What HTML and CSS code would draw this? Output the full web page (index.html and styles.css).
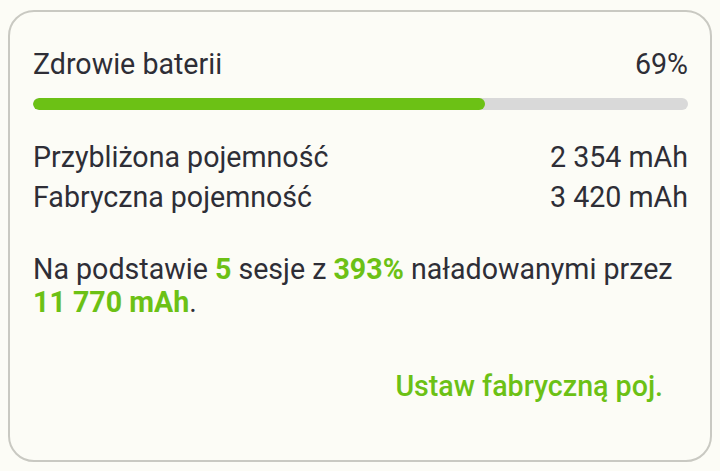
FILE: index.html
```html
<!DOCTYPE html>
<html lang="pl">
<head>
    <meta charset="UTF-8">
    <meta name="viewport" content="width=device-width, initial-scale=1.0">
    <title>Zdrowie baterii</title>
    <link rel="stylesheet" href="styles.css">
</head>
<body>
    <div class="card">
        <div class="row head">
            <span>Zdrowie baterii</span>
            <span>69%</span>
        </div>
        <div class="bar"><div class="fill" style="width: 69%"></div></div>

        <div class="rows">
            <div class="row">
                <span>Przybliżona pojemność</span>
                <span>2&nbsp;354 mAh</span>
            </div>
            <div class="row">
                <span>Fabryczna pojemność</span>
                <span>3&nbsp;420 mAh</span>
            </div>
        </div>

        <p class="note">Na podstawie <b>5</b> sesje z <b>393%</b> naładowanymi przez <b>11&nbsp;770&nbsp;mAh</b>.</p>

        <div class="actions">
            <button type="button">Ustaw fabryczną poj.</button>
        </div>
    </div>
</body>
</html>
```

FILE: styles.css
```css
body {
    margin: 0;
    background-color: #fcfcf6;
    font-family: Roboto, 'Noto Sans', sans-serif;
    color: #2e2e36;
    padding: 10px 8px;
}

.card {
    box-sizing: border-box;
    height: 452px;
    border: 2px solid #c9c9c2;
    border-radius: 26px;
    background-color: #fcfcf6;
    padding: 32px 22px 0 23px;
}

.row {
    display: flex;
    justify-content: space-between;
    font-size: 28.6px;
    line-height: 40px;
}

.head {
    margin-bottom: 14px;
}

.bar {
    height: 12px;
    border-radius: 6px;
    background-color: #d9d9d9;
    overflow: hidden;
}

.fill {
    height: 100%;
    border-radius: 6px;
    background-color: #6cc115;
}

.rows {
    margin-top: 27px;
}

.note {
    margin: 36px 0 0;
    font-size: 28.6px;
    line-height: 33px;
}

.note b {
    color: #6cc115;
    font-weight: 700;
}

.actions {
    display: flex;
    justify-content: flex-end;
    margin-top: 50px;
}

button {
    border: none;
    background: none;
    padding: 0 25px 0 0;
    font-family: Roboto, sans-serif;
    font-size: 28.6px;
    line-height: 34px;
    font-weight: 500;
    color: #6cc115;
    cursor: pointer;
}
```
